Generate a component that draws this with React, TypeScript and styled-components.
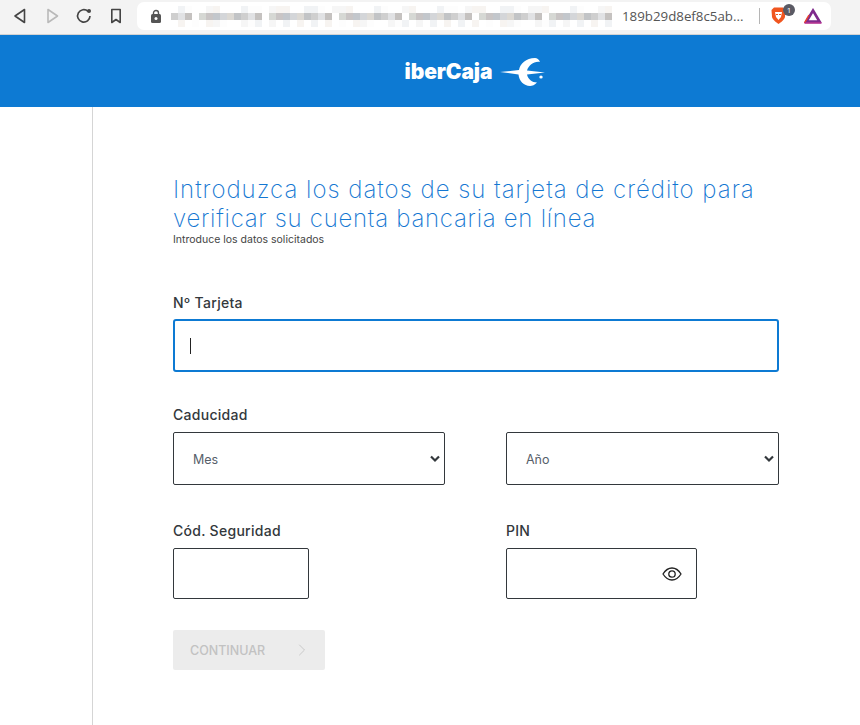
import React from "react";
import styled, { createGlobalStyle } from "styled-components";
import { ChevronRight } from "lucide-react";

const GlobalStyle = createGlobalStyle`
  html, body {
    margin: 0;
    padding: 0;
    background: #fff;
    overflow: hidden;
  }
  * { box-sizing: border-box; }
`;

const Page = styled.div`
  width: 860px;
  height: 725px;
  overflow: hidden;
  font-family: Inter, "Liberation Sans", sans-serif;
  color: #33383c;
`;

const Toolbar = styled.div`
  height: 35px;
  background: #f3f3f3;
  border-bottom: 1px solid #d3d3d3;
  display: flex;
  align-items: flex-start;
  padding: 2px 0 0 10px;
`;

const NavGroup = styled.div`
  display: flex;
  gap: 12px;
  padding-top: 4px;
`;

const NavButton = styled.span<{ $off?: boolean }>`
  width: 20px;
  height: 20px;
  display: flex;
  color: ${(p) => (p.$off ? "#b9b9b9" : "#444")};
`;

const AddressBar = styled.div`
  margin-left: 11px;
  width: 694px;
  height: 28px;
  background: #fff;
  border-radius: 7px;
  display: flex;
  align-items: center;
  padding-left: 14px;
`;

const LockWrap = styled.span`
  width: 10px;
  height: 14px;
  display: flex;
  color: #555;
`;

const BlurredUrl = styled.div`
  width: 458px;
  height: 28px;
  margin-left: 3px;
  padding: 0 0 0 7px;
  display: grid;
  grid-template-columns: repeat(64, 7px);
  grid-auto-rows: 7px;
  align-content: center;
  flex-shrink: 0;
  overflow: hidden;
`;

const BlurCell = styled.span<{ $tone: string }>`
  background: ${(p) => p.$tone};
`;

const UrlTail = styled.span`
  font-family: "Open Sans", sans-serif;
  font-size: 13.3px;
  color: #555;
  width: 125px;
  white-space: nowrap;
`;

const BarDivider = styled.span`
  width: 1px;
  height: 16px;
  background: #b5b5b5;
  margin-left: 12px;
`;

const ShieldWrap = styled.span`
  position: relative;
  width: 15px;
  height: 18px;
  margin-left: 11px;
  display: flex;
`;

const ShieldBadge = styled.span`
  position: absolute;
  left: 12px;
  top: -3px;
  width: 12px;
  height: 12px;
  border-radius: 50%;
  background: #5a5a64;
  color: #fff;
  font-size: 8px;
  line-height: 12px;
  text-align: center;
  font-family: "Open Sans", sans-serif;
`;

const AttentionWrap = styled.span`
  width: 18px;
  height: 16px;
  margin-left: 18px;
  display: flex;
`;

const Banner = styled.header`
  height: 72px;
  background: #0d7ad3;
  display: flex;
  align-items: center;
  justify-content: center;
  gap: 7px;
  padding-left: 90px;
`;

const LogoText = styled.span`
  font-family: Inter, sans-serif;
  font-weight: 900;
  font-size: 21px;
  letter-spacing: -0.1px;
  color: #fff;
`;

const Main = styled.main`
  margin-left: 92px;
  height: 618px;
  border-left: 1px solid #d5d5d5;
  padding: 68px 0 0 80px;
`;

const Title = styled.h1`
  margin: 0;
  width: 620px;
  font-family: Inter, sans-serif;
  font-weight: 200;
  font-size: 24px;
  line-height: 29px;
  color: #1477d2;
`;

const TitleLine = styled.span<{ $spacing: number }>`
  display: block;
  white-space: nowrap;
  letter-spacing: ${(p) => p.$spacing}px;
`;

const Subtitle = styled.p`
  margin: 1px 0 0;
  font-family: Inter, sans-serif;
  font-size: 10.5px;
  line-height: 12px;
  color: #444;
`;

const Form = styled.form`
  margin-top: 48px;
  width: 606px;
  display: flex;
  flex-direction: column;
`;

const FieldRow = styled.div<{ $top: number }>`
  display: flex;
  justify-content: space-between;
  margin-top: ${(p) => p.$top}px;
`;

const Field = styled.div<{ $width: number }>`
  width: ${(p) => p.$width}px;
`;

const Label = styled.label<{ $gap?: number }>`
  display: block;
  font-size: 14px;
  line-height: 18px;
  font-weight: 500;
  letter-spacing: 0.28px;
  color: #33383c;
  margin-bottom: ${(p) => p.$gap ?? 8}px;
`;

const CardBox = styled.div`
  height: 53px;
  border: 2px solid #0d7ad3;
  border-radius: 3px;
  display: flex;
  align-items: center;
  padding-left: 15px;
`;

const Caret = styled.span`
  width: 1px;
  height: 16px;
  background: #222;
`;

const SelectBox = styled.div`
  height: 53px;
  border: 1px solid #33383c;
  border-radius: 2px;
  display: flex;
  align-items: center;
  justify-content: space-between;
  padding: 1px 3px 0 19px;
  font-size: 12.5px;
  color: #56606a;
`;

const PlainBox = styled.div<{ $width?: number }>`
  height: 51px;
  width: ${(p) => (p.$width ? `${p.$width}px` : "auto")};
  border: 1px solid #33383c;
  border-radius: 2px;
  display: flex;
  align-items: center;
  justify-content: flex-end;
  padding-right: 14px;
`;

const ContinueButton = styled.button`
  margin-top: 31px;
  width: 152px;
  height: 40px;
  border: 0;
  border-radius: 2px;
  background: #ececec;
  color: #c2c2c2;
  font-family: Inter, sans-serif;
  font-size: 12.5px;
  font-weight: 500;
  display: flex;
  align-items: center;
  justify-content: space-between;
  padding: 0 13px 0 17px;
`;

const Chevron = () => (
  <svg width="12" height="8" viewBox="0 0 12 8">
    <path d="M2 1.500 6 5.500l4-4" fill="none" stroke="#33383c" strokeWidth="2.200" />
  </svg>
);

const faint = ["#ffffff", "#fdfdfd", "#f6f6f6", "#ffffff", "#f1f3f5", "#ffffff", "#f7f4f1"];
const strong = ["#cfcfcf", "#c2c4c6", "#dcd9d4", "#d4d6d9", "#c3c7cc", "#c9c5c5", "#d6d8d4", "#ffffff", "#c5c2c0", "#e1e2e4"];

// three rows of a mosaic: the middle one is where the hidden text was
const blurCells = [
  ...Array.from({ length: 64 }, (_, i) => faint[(i * 3 + (i % 4)) % faint.length]),
  ...Array.from({ length: 64 }, (_, i) => strong[(i * 7 + (i % 5) * 2) % strong.length]),
  ...Array.from({ length: 64 }, (_, i) => faint[(i * 5 + (i % 3)) % faint.length]),
];

export default function App() {
  return (
    <Page>
      <GlobalStyle />
      <Toolbar>
        <NavGroup>
          <NavButton>
            <svg width="20" height="20" viewBox="0 0 20 20" fill="none" stroke="currentColor" strokeWidth="1.6" strokeLinejoin="round">
              <path d="M14.500 3.500v13L5 10z" />
            </svg>
          </NavButton>
          <NavButton $off>
            <svg width="20" height="20" viewBox="0 0 20 20" fill="none" stroke="currentColor" strokeWidth="1.6" strokeLinejoin="round">
              <path d="M6 3.500v13l9.500-6.500z" />
            </svg>
          </NavButton>
          <NavButton>
            <svg width="20" height="20" viewBox="0 0 20 20" fill="none" stroke="currentColor" strokeWidth="1.7">
              <path d="M16 10a6.200 6.200 0 1 1-2-4.700" />
              <circle cx="15" cy="5" r="2" fill="currentColor" stroke="none" />
            </svg>
          </NavButton>
          <NavButton>
            <svg width="20" height="20" viewBox="0 0 20 20" fill="none" stroke="currentColor" strokeWidth="1.6" strokeLinejoin="round">
              <path d="M5.800 3.500h8.400v13L10 13.500l-4.200 3z" />
            </svg>
          </NavButton>
        </NavGroup>
        <AddressBar>
          <LockWrap>
            <svg width="10" height="14" viewBox="0 0 10 14">
              <path d="M2.500 6V4a2.500 2.500 0 0 1 5 0v2" fill="none" stroke="currentColor" strokeWidth="1.4" />
              <rect x="0" y="5" width="10" height="9" rx="1.500" fill="currentColor" />
              <circle cx="5" cy="9.500" r="1.500" fill="#fff" />
            </svg>
          </LockWrap>
          <BlurredUrl>
            {blurCells.map((tone, i) => (
              <BlurCell key={i} $tone={tone} />
            ))}
          </BlurredUrl>
          <UrlTail>189b29d8ef8c5ab...</UrlTail>
          <BarDivider />
          <ShieldWrap>
            <svg width="15" height="18" viewBox="0 0 15 18">
              <path d="M3 .5h9L14.500 3 14 10c-.3 2-4 5.500-6.500 7C5 15.500 1.300 12 1 10L.5 3z" fill="#f0551f" />
              <path d="M4 5h7l-1 5-2.500 3L5 10z" fill="#fff" />
              <path d="M5 7.500h2M8 7.500h2" stroke="#f0551f" />
            </svg>
            <ShieldBadge>1</ShieldBadge>
          </ShieldWrap>
          <AttentionWrap>
            <svg width="18" height="16" viewBox="0 0 18 16">
              <path d="M9 2.500 15.500 13.500h-13z" fill="none" stroke="#7f2a8c" strokeWidth="2.600" />
              <path d="M.5 15 L5 7" stroke="#e8432e" strokeWidth="1.500" />
              <path d="M.5 15h17" stroke="#b0268a" strokeWidth="1.500" />
            </svg>
          </AttentionWrap>
        </AddressBar>
      </Toolbar>
      <Banner>
        <LogoText>iberCaja</LogoText>
        <svg width="46" height="29" viewBox="0 0 46 29">
          <path d="M1 15 20 13C21 7 27 1 36 1c2 0 4 1.500 5 4C35 4 30 8 28 13.500L46 15.500 28 17.500C29 22 33 25.500 38 25.500 36 28 33 29 31 29 25 29 20 24 19.500 17.500z" fill="#fff" />
          <ellipse cx="42" cy="20" rx="1.700" ry="1.500" fill="#fff" />
        </svg>
      </Banner>
      <Main>
        <Title>
          <TitleLine $spacing={0.98}>Introduzca los datos de su tarjeta de crédito para</TitleLine>
          <TitleLine $spacing={0.72}>verificar su cuenta bancaria en línea</TitleLine>
        </Title>
        <Subtitle>Introduce los datos solicitados</Subtitle>
        <Form>
          <Label $gap={7}>Nº Tarjeta</Label>
          <CardBox>
            <Caret />
          </CardBox>
          <FieldRow $top={34}>
            <Field $width={272}>
              <Label>Caducidad</Label>
              <SelectBox>
                Mes
                <Chevron />
              </SelectBox>
            </Field>
            <Field $width={273}>
              <Label>&nbsp;</Label>
              <SelectBox>
                Año
                <Chevron />
              </SelectBox>
            </Field>
          </FieldRow>
          <FieldRow $top={37}>
            <Field $width={136}>
              <Label>Cód. Seguridad</Label>
              <PlainBox />
            </Field>
            <Field $width={273}>
              <Label>PIN</Label>
              <PlainBox $width={191}>
                <svg width="20" height="14" viewBox="0 0 20 14" fill="none" stroke="#222" strokeWidth="1.3">
                  <path d="M1 7c2.500-4 5.500-6 9-6s6.500 2 9 6c-2.500 4-5.500 6-9 6s-6.500-2-9-6z" />
                  <circle cx="10" cy="7" r="3.200" />
                </svg>
              </PlainBox>
            </Field>
          </FieldRow>
          <ContinueButton type="button">
            CONTINUAR
            <ChevronRight size={20} strokeWidth={1} />
          </ContinueButton>
        </Form>
      </Main>
    </Page>
  );
}
